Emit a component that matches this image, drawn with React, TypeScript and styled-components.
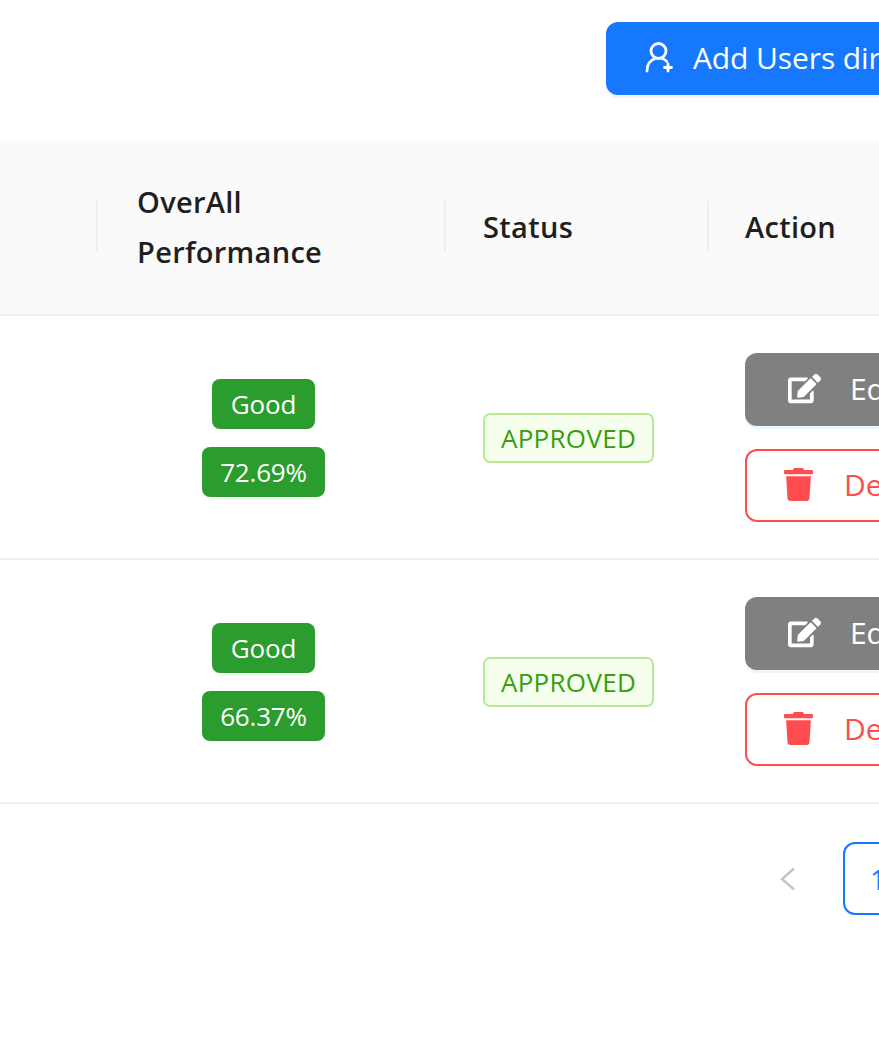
import React from 'react'
import styled, { createGlobalStyle } from 'styled-components'
import { FaEdit, FaTrash } from 'react-icons/fa'

const GlobalStyle = createGlobalStyle`
  html, body {
    background: #fff;
    margin: 0;
    overflow: hidden;
    padding: 0;
  }
  body {
    color: #1f1f1f;
    font-family: 'Open Sans', 'Noto Sans', sans-serif;
    -webkit-font-smoothing: antialiased;
  }
`

const Page = styled.div`
  height: 1041px;
  overflow: hidden;
  width: 879px;
`

const Toolbar = styled.div`
  box-sizing: border-box;
  display: flex;
  height: 140px;
  padding: 22px 0 0 606px;
`

const AddButton = styled.button`
  align-items: center;
  background: #1677ff;
  border: none;
  border-radius: 12px 0 0 12px;
  box-shadow: 0 3px 0 rgba(5, 145, 255, 0.08);
  color: #fff;
  display: flex;
  flex-shrink: 0;
  font-family: inherit;
  font-size: 30px;
  gap: 20px;
  height: 73px;
  letter-spacing: -0.1px;
  padding: 0 0 3px 39px;
  white-space: nowrap;
  width: 360px;
`

const Table = styled.table`
  border-collapse: separate;
  border-spacing: 0;
  table-layout: fixed;
  width: 1108px;
`

const HeadCell = styled.th<{ $divider?: boolean; $inset: number }>`
  background: #fafafa;
  border-bottom: 2px solid #f0f0f0;
  box-sizing: border-box;
  font-size: 29px;
  font-weight: 600;
  height: 176px;
  letter-spacing: 0.3px;
  line-height: 50px;
  padding: 0 0 0 ${({ $inset }) => $inset}px;
  position: relative;
  text-align: left;

  &::before {
    background: #efefef;
    content: '';
    display: ${({ $divider }) => ($divider ? 'block' : 'none')};
    height: 50px;
    left: -1px;
    position: absolute;
    top: 61px;
    width: 2px;
  }
`

const Cell = styled.td<{ $inset: number }>`
  border-bottom: 2px solid #f0f0f0;
  box-sizing: border-box;
  height: 244px;
  padding: 0 0 0 ${({ $inset }) => $inset}px;
`

const ScoreStack = styled.div`
  align-items: center;
  display: flex;
  flex-direction: column;
  gap: 18px;
  margin-top: 1px;
  width: 253px;
`

const ScoreBadge = styled.span<{ $width: number }>`
  align-items: center;
  background: #2a9d2e;
  border-radius: 8px;
  color: #fff;
  display: flex;
  font-size: 26px;
  height: 50px;
  justify-content: center;
  letter-spacing: -0.2px;
  width: ${({ $width }) => $width}px;
`

const StatusTag = styled.span`
  align-items: center;
  background: #f6ffed;
  border: 2px solid #b7eb8f;
  border-radius: 7px;
  box-sizing: border-box;
  color: #389e0d;
  display: flex;
  font-size: 26px;
  height: 50px;
  justify-content: center;
  letter-spacing: 0.3px;
  margin-top: 1px;
  width: 171px;
`

const Actions = styled.div`
  display: flex;
  flex-direction: column;
  gap: 23px;
  margin-top: 1px;
`

const ActionButton = styled.button<{ $danger?: boolean }>`
  align-items: center;
  background: ${({ $danger }) => ($danger ? '#fff' : '#808080')};
  border: ${({ $danger }) => ($danger ? '2px solid #ff4d4f' : 'none')};
  border-radius: 12px;
  box-shadow: ${({ $danger }) => ($danger ? 'none' : '0 3px 0 rgba(5, 145, 255, 0.08)')};
  box-sizing: border-box;
  color: ${({ $danger }) => ($danger ? '#ff4d4f' : '#fff')};
  display: flex;
  font-family: inherit;
  font-size: 30px;
  gap: 29px;
  height: 73px;
  letter-spacing: -0.1px;
  padding: 0 0 2px ${({ $danger }) => ($danger ? 35 : 43)}px;
  width: 280px;
`

const Pagination = styled.div`
  align-items: center;
  display: flex;
  gap: 48px;
  padding: 38px 0 0 780px;
`

const PrevArrow = styled.svg`
  color: #c4c4c4;
  flex-shrink: 0;
`

const PageLink = styled.span`
  align-items: center;
  border: 2px solid #1677ff;
  border-radius: 12px;
  box-sizing: border-box;
  color: #1677ff;
  display: flex;
  flex-shrink: 0;
  font-size: 28px;
  height: 73px;
  justify-content: center;
  width: 70px;
`

const AddUserIcon = () => (
  <svg width="28" height="32" viewBox="0 0 28 32" fill="none" stroke="currentColor" strokeWidth="2.8" strokeLinecap="round">
    <circle cx="13.5" cy="10" r="7.5" />
    <path d="M2 30c0-6.5 3.5-11 8.5-12.5" />
    <path d="M17 17.5c2 .6 3.6 1.5 4.8 3" />
    <path d="M19.5 26.5h7M23 23v7" />
  </svg>
)

const rows = [{ score: '72.69%' }, { score: '66.37%' }]

const App = () => (
  <Page>
    <GlobalStyle />
    <Toolbar>
      <AddButton>
        <AddUserIcon />
        Add Users directly
      </AddButton>
    </Toolbar>
    <Table>
      <colgroup>
        <col style={{ width: 97 }} />
        <col style={{ width: 348 }} />
        <col style={{ width: 263 }} />
        <col style={{ width: 400 }} />
      </colgroup>
      <thead>
        <tr>
          <HeadCell $inset={0} />
          <HeadCell $divider $inset={40}>
            OverAll
            <br />
            Performance
          </HeadCell>
          <HeadCell $divider $inset={38}>
            Status
          </HeadCell>
          <HeadCell $divider $inset={37}>
            Action
          </HeadCell>
        </tr>
      </thead>
      <tbody>
        {rows.map(({ score }) => (
          <tr key={score}>
            <Cell $inset={0} />
            <Cell $inset={40}>
              <ScoreStack>
                <ScoreBadge $width={103}>Good</ScoreBadge>
                <ScoreBadge $width={123}>{score}</ScoreBadge>
              </ScoreStack>
            </Cell>
            <Cell $inset={38}>
              <StatusTag>APPROVED</StatusTag>
            </Cell>
            <Cell $inset={37}>
              <Actions>
                <ActionButton>
                  <FaEdit size={33} />
                  Edit
                </ActionButton>
                <ActionButton $danger>
                  <FaTrash size={33} />
                  Delete
                </ActionButton>
              </Actions>
            </Cell>
          </tr>
        ))}
      </tbody>
    </Table>
    <Pagination>
      <PrevArrow width="15" height="24" viewBox="0 0 15 24" fill="none" stroke="currentColor" strokeWidth="2.4">
        <path d="M14 1.5 2 12l12 10.5" />
      </PrevArrow>
      <PageLink>1</PageLink>
    </Pagination>
  </Page>
)

export default App
